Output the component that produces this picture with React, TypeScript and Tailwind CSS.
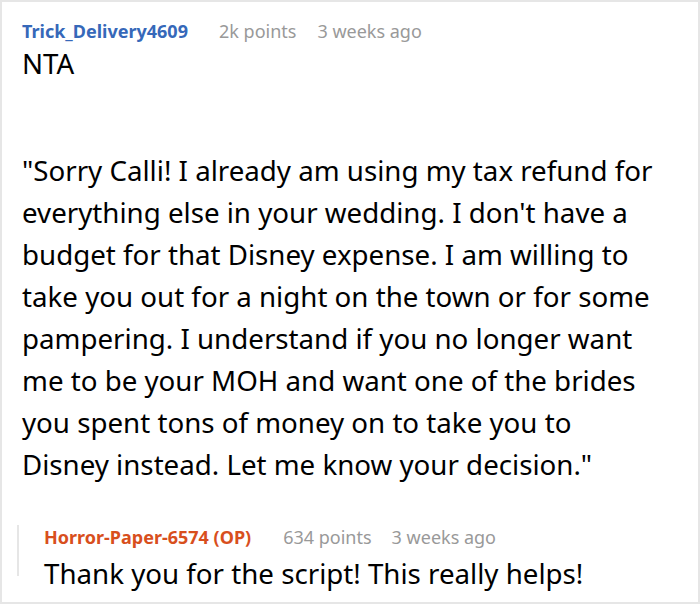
export default function App() {
    return (
        <div className="w-[700px] h-[604px] overflow-hidden bg-white border-2 border-[#e6e6e6] font-['Noto_Sans',sans-serif] text-black">
            <div className="pl-[20px] pr-[40px] pt-[17px]">
                <div className="flex items-baseline text-[18px] leading-[24px] whitespace-nowrap">
                    <span className="font-bold text-[#3668b9]">Trick_Delivery4609</span>
                    <span className="ml-[31px] text-[#999999]">2k points</span>
                    <span className="ml-[21px] text-[#999999]">3 weeks ago</span>
                </div>
                <p className="text-[27.7px] leading-[42px] -mt-[1px]">NTA</p>
                <p className="text-[27.7px] leading-[42px] mt-[65px]">
                    "Sorry Calli! I already am using my tax refund for everything else in your wedding. I don't have a budget for that Disney expense. I am willing to take you out for a night on the town or for some pampering. I understand if you no longer want me to be your MOH and want one of the brides you spent tons of money on to take you to Disney instead. Let me know your decision."
                </p>
            </div>
            <div className="ml-[15px] mt-[48px] border-l-2 border-[#e6e6e6] pl-[25px] h-[51px]">
                <div className="-mt-[8px] flex items-baseline text-[18px] leading-[24px]">
                    <span className="font-bold text-[#d84f1d]">Horror-Paper-6574 (OP)</span>
                    <span className="ml-[32px] text-[#999999]">634 points</span>
                    <span className="ml-[20px] text-[#999999]">3 weeks ago</span>
                </div>
                <p className="text-[27.7px] leading-[40px] mt-[4px] whitespace-nowrap">Thank you for the script! This really helps!</p>
            </div>
        </div>
    );
}
